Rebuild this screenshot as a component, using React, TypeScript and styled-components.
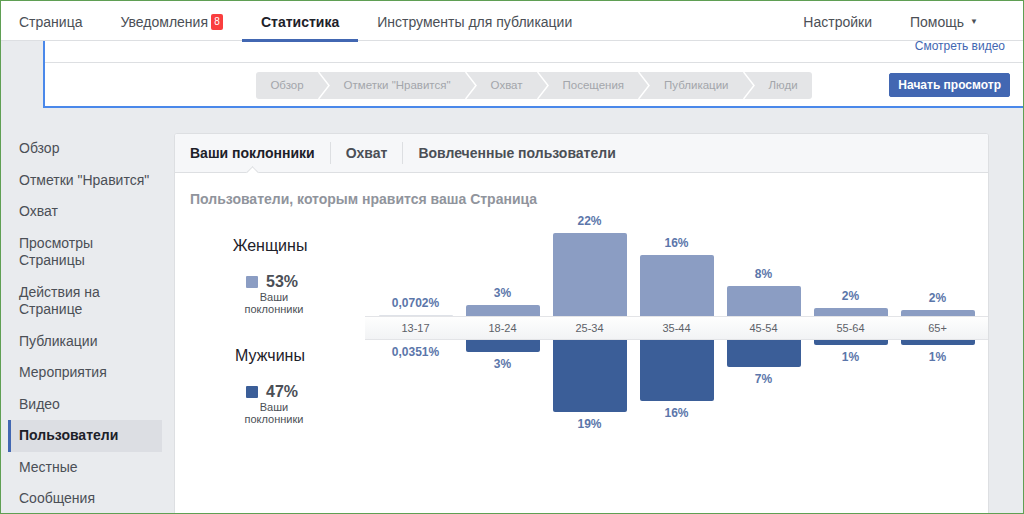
import styled, { createGlobalStyle } from 'styled-components';

const GlobalStyle = createGlobalStyle`
  html, body {
    margin: 0;
    padding: 0;
    background: #e9ebee;
  }
  * {
    box-sizing: border-box;
  }
  body {
    font-family: "Liberation Sans", Arial, Helvetica, sans-serif;
  }
`;

const Frame = styled.div`
  width: 1024px;
  height: 514px;
  border: 1px solid #5f9f53;
  overflow: hidden;
  background: #e9ebee;
  display: flex;
  flex-direction: column;
`;

const TopNav = styled.nav`
  display: flex;
  align-items: stretch;
  height: 40px;
  flex-shrink: 0;
  background: #ffffff;
  border-bottom: 1px solid #dddfe2;
  padding-left: 0;
  padding-right: 26px;
  position: relative;
  z-index: 2;
`;

const NavItem = styled.div<{ $active?: boolean }>`
  display: flex;
  align-items: center;
  height: 41px;
  margin-bottom: -1px;
  padding: 0 19px;
  font-size: 14px;
  font-weight: ${(p) => (p.$active ? 700 : 400)};
  color: ${(p) => (p.$active ? '#1d2129' : '#4b4f56')};
  box-shadow: ${(p) => (p.$active ? 'inset 0 -3px 0 #4267b2' : 'none')};
  white-space: nowrap;

  &:first-child {
    margin-left: -1px;
  }
`;

const NavSpacer = styled.div`
  flex: 1;
`;

const Badge = styled.span`
  display: inline-flex;
  align-items: center;
  justify-content: center;
  width: 12px;
  height: 16px;
  margin-left: 3px;
  border-radius: 2px;
  background: #fa3e3e;
  color: #ffffff;
  font-size: 10px;
`;

const Caret = styled.span`
  font-size: 8px;
  margin-left: 6px;
  color: #4b4f56;
`;

const TourPanel = styled.section`
  margin-left: 42px;
  background: #ffffff;
  border-left: 2px solid #4a88ea;
  border-bottom: 2px solid #4a88ea;
  flex-shrink: 0;
`;

const VideoRow = styled.div`
  display: flex;
  justify-content: flex-end;
  height: 22px;
  padding-right: 18px;
  border-bottom: 1px solid #dddfe2;
`;

const VideoLink = styled.a`
  font-size: 12px;
  line-height: 10px;
  color: #4267b2;
  text-decoration: none;
`;

const TourRow = styled.div`
  display: grid;
  grid-template-columns: 1fr auto 1fr;
  align-items: center;
  height: 43px;
  padding-top: 1px;
`;

const Crumbs = styled.div`
  grid-column: 2;
  display: flex;
  height: 27px;
  background: #e4e5e7;
  border-radius: 3px;
`;

const Crumb = styled.span`
  padding: 0 14px;
  font-size: 11.5px;
  line-height: 27px;
  color: #a3a6ab;
  white-space: nowrap;
`;

const StartButton = styled.button`
  grid-column: 3;
  justify-self: end;
  margin-right: 13px;
  height: 24px;
  padding: 0 8px;
  border: 1px solid #4267b2;
  border-radius: 2px;
  background: #4267b2;
  color: #ffffff;
  font-family: inherit;
  font-size: 12px;
  font-weight: 700;
`;

const Content = styled.div`
  display: flex;
  align-items: flex-start;
  padding-top: 25px;
  flex: 1;
  min-height: 0;
`;

const Sidebar = styled.ul`
  list-style: none;
  margin: 0 0 0 7px;
  padding: 0;
  width: 154px;
  flex-shrink: 0;
`;

const SideItem = styled.li<{ $active?: boolean }>`
  padding: 7px 0 7px ${(p) => (p.$active ? '8px' : '11px')};
  font-size: 14px;
  line-height: 17.5px;
  white-space: pre-line;
  color: ${(p) => (p.$active ? '#1d2129' : '#4b4f56')};
  font-weight: ${(p) => (p.$active ? 700 : 400)};
  background: ${(p) => (p.$active ? '#dcdee3' : 'transparent')};
  border-left: ${(p) => (p.$active ? '3px solid #4267b2' : 'none')};
`;

const Card = styled.div`
  margin-left: 12px;
  width: 815px;
  height: 420px;
  flex-shrink: 0;
  background: #ffffff;
  border: 1px solid #dddfe2;
  border-radius: 3px;
  overflow: hidden;
`;

const CardTabs = styled.div`
  display: flex;
  align-items: center;
  height: 39px;
  background: #f6f7f9;
  border-bottom: 1px solid #dddfe2;
`;

const Tab = styled.div<{ $active?: boolean }>`
  position: relative;
  display: flex;
  align-items: center;
  height: 100%;
  padding: 0 15px 0 15px;
  font-size: 14px;
  font-weight: 700;
  color: ${(p) => (p.$active ? '#1d2129' : '#4b4f56')};

  &::after {
    content: '';
    display: ${(p) => (p.$active ? 'block' : 'none')};
    position: absolute;
    left: 50%;
    bottom: -5px;
    width: 8px;
    height: 8px;
    margin-left: -4px;
    background: #ffffff;
    border-left: 1px solid #dddfe2;
    border-top: 1px solid #dddfe2;
    transform: rotate(45deg);
  }
`;

const TabDivider = styled.span`
  width: 1px;
  height: 22px;
  background: #dddfe2;
`;

const CardBody = styled.div`
  padding: 17px 0 0 15px;
`;

const Subtitle = styled.h3`
  margin: 0;
  font-size: 14px;
  line-height: 18px;
  font-weight: 700;
  color: #90949c;
`;

const DemoRow = styled.div`
  display: flex;
  margin-top: 3px;
`;

const StatsCol = styled.div`
  width: 160px;
  padding-top: 25px;
  display: flex;
  flex-direction: column;
  align-items: center;
  text-align: center;
`;

const GenderTitle = styled.div<{ $gap?: number }>`
  margin-top: ${(p) => p.$gap ?? 0}px;
  font-size: 16px;
  line-height: 20px;
  color: #1d2129;
`;

const ShareRow = styled.div`
  display: flex;
  align-items: center;
  margin-top: 17px;
  height: 18px;
  padding-left: 4px;
`;

const Swatch = styled.span<{ $color: string }>`
  width: 12px;
  height: 12px;
  border-radius: 1px;
  background: ${(p) => p.$color};
  margin-right: 8px;
`;

const ShareValue = styled.span`
  font-size: 16px;
  font-weight: 700;
  color: #4b4f56;
`;

const ShareCaption = styled.div`
  font-size: 11px;
  line-height: 12px;
  color: #4b4f56;
  padding-left: 8px;
`;

const Chart = styled.div`
  margin-left: 15px;
  flex: 1;
`;

const BarsRow = styled.div<{ $height: number; $down?: boolean }>`
  display: flex;
  height: ${(p) => p.$height}px;
  padding-left: 7px;
  align-items: ${(p) => (p.$down ? 'flex-start' : 'flex-end')};
`;

const BarCol = styled.div<{ $down?: boolean }>`
  width: 87px;
  display: flex;
  flex-direction: ${(p) => (p.$down ? 'column-reverse' : 'column')};
  align-items: center;
`;

const BarLabel = styled.span<{ $down?: boolean }>`
  font-size: 12px;
  line-height: 14px;
  font-weight: 700;
  color: #5b76aa;
  margin: ${(p) => (p.$down ? '5px 0 0' : '0 0 5px')};
`;

const Bar = styled.div<{ $h: number; $down?: boolean; $faint?: boolean }>`
  width: 74px;
  height: ${(p) => p.$h}px;
  background: ${(p) => (p.$faint ? '#dfe2e8' : p.$down ? '#3b5e98' : '#8b9dc3')};
  border-radius: ${(p) => (p.$down ? '0 0 2px 2px' : '2px 2px 0 0')};
`;

const AxisBand = styled.div`
  display: flex;
  height: 24px;
  padding-left: 7px;
  border-top: 1px solid #e3e4e7;
  border-bottom: 1px solid #e3e4e7;
  background: linear-gradient(#fefefe, #f2f3f5);
`;

const AxisLabel = styled.span`
  width: 87px;
  text-align: center;
  font-size: 11px;
  line-height: 22px;
  color: #5d6168;
`;

const ages = ['13-17', '18-24', '25-34', '35-44', '45-54', '55-64', '65+'];

const women = [
  { label: '0,0702%', h: 1 },
  { label: '3%', h: 11 },
  { label: '22%', h: 83 },
  { label: '16%', h: 61 },
  { label: '8%', h: 30 },
  { label: '2%', h: 8 },
  { label: '2%', h: 6 },
];

const men = [
  { label: '0,0351%', h: 0 },
  { label: '3%', h: 12 },
  { label: '19%', h: 72 },
  { label: '16%', h: 61 },
  { label: '7%', h: 27 },
  { label: '1%', h: 5 },
  { label: '1%', h: 5 },
];

const sideItems = [
  'Обзор',
  'Отметки "Нравится"',
  'Охват',
  'Просмотры\nСтраницы',
  'Действия на\nСтранице',
  'Публикации',
  'Мероприятия',
  'Видео',
  'Пользователи',
  'Местные',
  'Сообщения',
];

const steps = ['Обзор', 'Отметки "Нравится"', 'Охват', 'Посещения', 'Публикации', 'Люди'];

const Chevron = () => (
  <svg width="12" height="27" viewBox="0 0 12 27">
    <polyline points="0.5,0 11,13.5 0.5,27" fill="none" stroke="#ffffff" strokeWidth="1.5" />
  </svg>
);

export default function App() {
  return (
    <>
      <GlobalStyle />
      <Frame>
        <TopNav>
          <NavItem>Страница</NavItem>
          <NavItem>
            Уведомления<Badge>8</Badge>
          </NavItem>
          <NavItem $active>Статистика</NavItem>
          <NavItem>Инструменты для публикации</NavItem>
          <NavSpacer />
          <NavItem>Настройки</NavItem>
          <NavItem>
            Помощь<Caret>▼</Caret>
          </NavItem>
        </TopNav>

        <TourPanel>
          <VideoRow>
            <VideoLink>Смотреть видео</VideoLink>
          </VideoRow>
          <TourRow>
            <Crumbs>
              {steps.map((s, i) => (
                <>
                  {i > 0 && <Chevron key={'c' + i} />}
                  <Crumb key={s}>{s}</Crumb>
                </>
              ))}
            </Crumbs>
            <StartButton>Начать просмотр</StartButton>
          </TourRow>
        </TourPanel>

        <Content>
          <Sidebar>
            {sideItems.map((item) => (
              <SideItem key={item} $active={item === 'Пользователи'}>
                {item}
              </SideItem>
            ))}
          </Sidebar>

          <Card>
            <CardTabs>
              <Tab $active>Ваши поклонники</Tab>
              <TabDivider />
              <Tab>Охват</Tab>
              <TabDivider />
              <Tab>Вовлеченные пользователи</Tab>
            </CardTabs>
            <CardBody>
              <Subtitle>Пользователи, которым нравится ваша Страница</Subtitle>
              <DemoRow>
                <StatsCol>
                  <GenderTitle>Женщины</GenderTitle>
                  <ShareRow>
                    <Swatch $color="#8b9dc3" />
                    <ShareValue>53%</ShareValue>
                  </ShareRow>
                  <ShareCaption>Ваши</ShareCaption>
                  <ShareCaption>поклонники</ShareCaption>

                  <GenderTitle $gap={31}>Мужчины</GenderTitle>
                  <ShareRow>
                    <Swatch $color="#3b5e98" />
                    <ShareValue>47%</ShareValue>
                  </ShareRow>
                  <ShareCaption>Ваши</ShareCaption>
                  <ShareCaption>поклонники</ShareCaption>
                </StatsCol>

                <Chart>
                  <BarsRow $height={105}>
                    {women.map((w, i) => (
                      <BarCol key={i}>
                        <BarLabel>{w.label}</BarLabel>
                        <Bar $h={w.h} $faint={i === 0} />
                      </BarCol>
                    ))}
                  </BarsRow>
                  <AxisBand>
                    {ages.map((a) => (
                      <AxisLabel key={a}>{a}</AxisLabel>
                    ))}
                  </AxisBand>
                  <BarsRow $height={100} $down>
                    {men.map((m, i) => (
                      <BarCol key={i} $down>
                        <BarLabel $down>{m.label}</BarLabel>
                        <Bar $h={m.h} $down />
                      </BarCol>
                    ))}
                  </BarsRow>
                </Chart>
              </DemoRow>
            </CardBody>
          </Card>
        </Content>
      </Frame>
    </>
  );
}
